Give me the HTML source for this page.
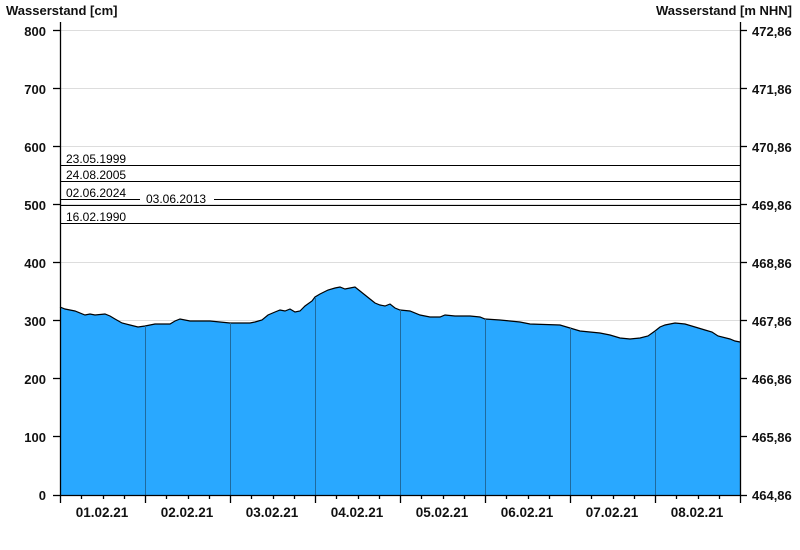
<!DOCTYPE html>
<html><head><meta charset="utf-8"><style>
body{margin:0;background:#fff;}
svg{display:block;font-family:"Liberation Sans",Arial,sans-serif;}
.b{font-weight:bold;font-size:13px;fill:#111;}
.s{font-size:12px;fill:#000;}
</style></head><body>
<svg width="800" height="550" viewBox="0 0 800 550">
<g stroke="#dddddd" stroke-width="1">
<line x1="60" x2="740" y1="30.5" y2="30.5"/><line x1="60" x2="740" y1="88.5" y2="88.5"/>
<line x1="60" x2="740" y1="146.5" y2="146.5"/><line x1="60" x2="740" y1="204.5" y2="204.5"/>
<line x1="60" x2="740" y1="262.5" y2="262.5"/><line x1="60" x2="740" y1="320.5" y2="320.5"/>
<line x1="60" x2="740" y1="378.5" y2="378.5"/><line x1="60" x2="740" y1="436.5" y2="436.5"/>
</g>
<polygon fill="#29a8ff" stroke="none" points="60,495 60,307 65,309 75,311 85,315 90,314 95,315 105,314 110,316 115,319 122,323 130,325 138,327 145,326 155,324 170,324 175,321 180,319 190,321 210,321 220,322 230,323 250,323 255,322 262,320 268,315 275,312 280,310 285,311 290,309 295,312 300,311 305,306 312,301 315,297 320,294 328,290 335,288 340,287 345,289 350,288 355,287 360,291 365,295 370,299 375,303 380,305 385,306 390,304 395,308 400,310 410,311 420,315 430,317 440,317 445,315 455,316 470,316 480,317 485,319 500,320 510,321 520,322 530,324 560,325 570,328 580,331 600,333 610,335 620,338 630,339 640,338 648,336 655,331 660,327 665,325 675,323 685,324 695,327 705,330 712,332 718,336 730,339 735,341 740,342 740,495"/>
<polyline fill="none" stroke="#000" stroke-width="1.2" points="60,307 65,309 75,311 85,315 90,314 95,315 105,314 110,316 115,319 122,323 130,325 138,327 145,326 155,324 170,324 175,321 180,319 190,321 210,321 220,322 230,323 250,323 255,322 262,320 268,315 275,312 280,310 285,311 290,309 295,312 300,311 305,306 312,301 315,297 320,294 328,290 335,288 340,287 345,289 350,288 355,287 360,291 365,295 370,299 375,303 380,305 385,306 390,304 395,308 400,310 410,311 420,315 430,317 440,317 445,315 455,316 470,316 480,317 485,319 500,320 510,321 520,322 530,324 560,325 570,328 580,331 600,333 610,335 620,338 630,339 640,338 648,336 655,331 660,327 665,325 675,323 685,324 695,327 705,330 712,332 718,336 730,339 735,341 740,342"/>
<g stroke="#1f6a9e" stroke-width="1">
<line x1="145.5" x2="145.5" y1="326" y2="495"/><line x1="230.5" x2="230.5" y1="323" y2="495"/>
<line x1="315.5" x2="315.5" y1="297" y2="495"/><line x1="400.5" x2="400.5" y1="310" y2="495"/>
<line x1="485.5" x2="485.5" y1="319" y2="495"/><line x1="570.5" x2="570.5" y1="328" y2="495"/>
<line x1="655.5" x2="655.5" y1="331" y2="495"/>
</g>
<g stroke="#000" stroke-width="1">
<line x1="60" x2="740" y1="165.5" y2="165.5"/>
<line x1="60" x2="740" y1="181.5" y2="181.5"/>
<line x1="60" x2="140" y1="199.5" y2="199.5"/><line x1="214" x2="740" y1="199.5" y2="199.5"/>
<line x1="60" x2="740" y1="205.5" y2="205.5"/>
<line x1="60" x2="740" y1="223.5" y2="223.5"/>
</g>
<text class="s" x="66" y="163">23.05.1999</text>
<text class="s" x="66" y="179">24.08.2005</text>
<text class="s" x="66" y="197">02.06.2024</text>
<text class="s" x="146" y="203">03.06.2013</text>
<text class="s" x="66" y="221">16.02.1990</text>
<g stroke="#000" stroke-width="1.3">
<line x1="60.5" x2="60.5" y1="22" y2="495"/>
<line x1="740.5" x2="740.5" y1="22" y2="495"/>
<line x1="60" x2="740" y1="495.5" y2="495.5"/>
<line x1="53" x2="60" y1="30.5" y2="30.5"/><line x1="53" x2="60" y1="88.5" y2="88.5"/>
<line x1="53" x2="60" y1="146.5" y2="146.5"/><line x1="53" x2="60" y1="204.5" y2="204.5"/>
<line x1="53" x2="60" y1="262.5" y2="262.5"/><line x1="53" x2="60" y1="320.5" y2="320.5"/>
<line x1="53" x2="60" y1="378.5" y2="378.5"/><line x1="53" x2="60" y1="436.5" y2="436.5"/>
<line x1="53" x2="60" y1="495.5" y2="495.5"/>
<line x1="740" x2="747" y1="30.5" y2="30.5"/><line x1="740" x2="747" y1="88.5" y2="88.5"/>
<line x1="740" x2="747" y1="146.5" y2="146.5"/><line x1="740" x2="747" y1="204.5" y2="204.5"/>
<line x1="740" x2="747" y1="262.5" y2="262.5"/><line x1="740" x2="747" y1="320.5" y2="320.5"/>
<line x1="740" x2="747" y1="378.5" y2="378.5"/><line x1="740" x2="747" y1="436.5" y2="436.5"/>
<line x1="740" x2="747" y1="495.5" y2="495.5"/>
<path d="M60.5 495v8M145.5 495v8M230.5 495v8M315.5 495v8M400.5 495v8M485.5 495v8M570.5 495v8M655.5 495v8M740.5 495v8"/>
<path d="M81.5 495v4M103.5 495v4M124.5 495v4M166.5 495v4M188.5 495v4M209.5 495v4M251.5 495v4M273.5 495v4M294.5 495v4M336.5 495v4M358.5 495v4M379.5 495v4M421.5 495v4M443.5 495v4M464.5 495v4M506.5 495v4M528.5 495v4M549.5 495v4M591.5 495v4M613.5 495v4M634.5 495v4M676.5 495v4M698.5 495v4M719.5 495v4"/>
</g>
<text class="b" x="6" y="15">Wasserstand [cm]</text>
<text class="b" x="792" y="15" text-anchor="end">Wasserstand [m NHN]</text>
<g class="b" text-anchor="end">
<text x="46" y="36">800</text><text x="46" y="94">700</text><text x="46" y="152">600</text>
<text x="46" y="210">500</text><text x="46" y="268">400</text><text x="46" y="326">300</text>
<text x="46" y="384">200</text><text x="46" y="442">100</text><text x="46" y="500">0</text>
</g>
<g class="b">
<text x="752" y="36">472,86</text><text x="752" y="94">471,86</text><text x="752" y="152">470,86</text>
<text x="752" y="210">469,86</text><text x="752" y="268">468,86</text><text x="752" y="326">467,86</text>
<text x="752" y="384">466,86</text><text x="752" y="442">465,86</text><text x="752" y="500">464,86</text>
</g>
<g class="b" text-anchor="middle" style="font-size:13.5px">
<text x="102" y="517">01.02.21</text><text x="187" y="517">02.02.21</text><text x="272" y="517">03.02.21</text>
<text x="357" y="517">04.02.21</text><text x="442" y="517">05.02.21</text><text x="527" y="517">06.02.21</text>
<text x="612" y="517">07.02.21</text><text x="697" y="517">08.02.21</text>
</g>
</svg>
</body></html>
